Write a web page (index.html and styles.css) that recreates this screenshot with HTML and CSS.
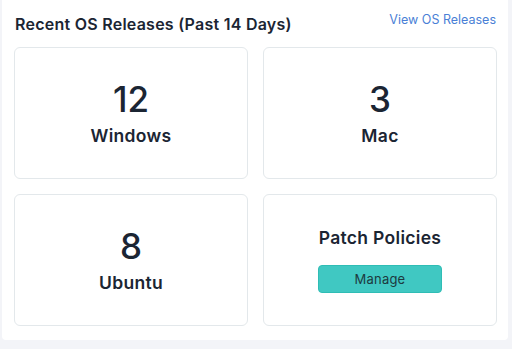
FILE: index.html
```html
<!DOCTYPE html>
<html>
<head>
<meta charset="utf-8">
<link rel="stylesheet" href="styles.css">
</head>
<body>
<div class="panel">
  <div class="header">
    <h2 class="title">Recent OS Releases (Past 14 Days)</h2>
    <a class="link" href="#">View OS Releases</a>
  </div>
  <div class="grid">
    <div class="card">
      <div class="num">12</div>
      <div class="label">Windows</div>
    </div>
    <div class="card">
      <div class="num">3</div>
      <div class="label">Mac</div>
    </div>
    <div class="card">
      <div class="num">8</div>
      <div class="label">Ubuntu</div>
    </div>
    <div class="card">
      <div class="label policy">Patch Policies</div>
      <button class="btn">Manage</button>
    </div>
  </div>
</div>
</body>
</html>
```
FILE: styles.css
```css
html, body {
  margin: 0;
  padding: 0;
  background: #f3f4f8;
  font-family: Inter, "Noto Sans", sans-serif;
  color: #1b2533;
}
.panel {
  margin-left: 2px;
  width: 506px;
  height: 340px;
  background: #ffffff;
  border-radius: 0 0 4px 4px;
  box-sizing: border-box;
  padding: 0 12px 0 12px;
}
.header {
  display: flex;
  justify-content: space-between;
  align-items: flex-start;
  height: 47px;
  padding-left: 1px;
}
.title {
  margin: 15px 0 0 0;
  font-size: 16px;
  font-weight: 600;
  line-height: 18px;
  letter-spacing: 0.25px;
  color: #1b2533;
}
.link {
  margin-top: 12px;
  font-size: 12.5px;
  line-height: 16px;
  color: #4a7fd6;
  text-decoration: none;
}
.grid {
  display: grid;
  grid-template-columns: 234px 234px;
  grid-template-rows: 132px 132px;
  column-gap: 15px;
  row-gap: 15px;
}
.card {
  border: 1px solid #e3e8eb;
  border-radius: 6px;
  display: flex;
  flex-direction: column;
  align-items: center;
  justify-content: center;
  box-sizing: border-box;
}
.num {
  font-size: 35px;
  font-weight: 500;
  line-height: 40px;
  color: #1b2533;
}
.label {
  margin-top: 6px;
  font-size: 17.5px;
  font-weight: 600;
  line-height: 22px;
  letter-spacing: 0.3px;
  color: #1b2533;
}
.policy {
  margin-top: 0;
}
.btn {
  margin-top: 16px;
  width: 124px;
  height: 28px;
  background: #40c8c2;
  border: 1px solid #2fbdb5;
  border-radius: 4px;
  font-family: Inter, "Noto Sans", sans-serif;
  font-size: 13px;
  letter-spacing: 0.2px;
  color: #1d3a40;
  padding: 0;
}
```
